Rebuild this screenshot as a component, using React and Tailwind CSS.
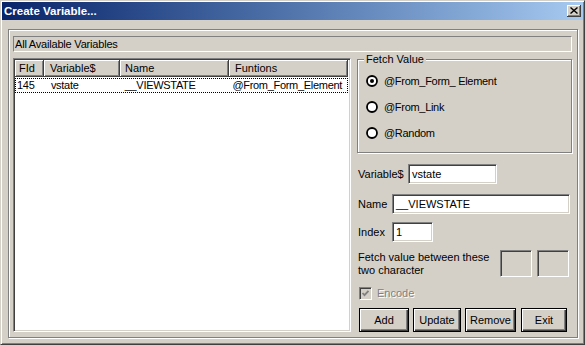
import React from "react";

const sunken =
  "border border-t-[#808080] border-l-[#808080] border-b-white border-r-white shadow-[inset_1px_1px_0_#404040,inset_-1px_-1px_0_#d4d0c8]";
const etched =
  "border border-[#808080] shadow-[inset_1px_1px_0_#fff,1px_1px_0_#fff]";
const raisedBtn =
  "border border-black bg-[#d4d0c8] shadow-[inset_1px_1px_0_#fff,inset_-1px_-1px_0_#404040,inset_-2px_-2px_0_#808080]";
const headCell =
  "h-full flex items-center border-r border-b border-[#404040] shadow-[inset_1px_1px_0_#fff,inset_-1px_-1px_0_#808080] bg-[#d4d0c8]";

const Radio = ({ checked }) => (
  <svg width="12" height="12" viewBox="0 0 12 12">
    <circle cx="6" cy="6" r="5" fill="#fff" stroke="#000" strokeWidth="1.8" />
    {checked && <circle cx="6" cy="6" r="2" fill="#000" />}
  </svg>
);

const Button = ({ label, className }) => (
  <div className={`${raisedBtn} h-[24px] flex items-center justify-center ${className}`}>
    {label}
  </div>
);

const columns = [
  { name: "FId", w: "w-[29px]", hp: "pl-[4px]", rp: "pl-[1px]", val: "145" },
  { name: "Variable$", w: "w-[76px]", hp: "pl-[6px]", rp: "pl-[7px]", val: "vstate" },
  { name: "Name", w: "w-[109px]", hp: "pl-[5px]", rp: "pl-[5px]", val: "__VIEWSTATE" },
  { name: "Funtions", w: "w-[119px]", hp: "pl-[6px]", rp: "pl-[4px]", val: "@From_Form_Element" },
];

export default function App() {
  return (
    <div className="w-[585px] h-[345px] bg-[#d4d0c8] border border-t-[#d4d0c8] border-l-[#d4d0c8] border-r-[#404040] border-b-[#404040] shadow-[inset_1px_1px_0_#fff,inset_-1px_-1px_0_#808080] flex flex-col overflow-hidden font-['Liberation_Sans',Arial,sans-serif] text-[11px] leading-[13px] text-black">
      {/* title bar */}
      <div className="mx-[1px] mt-[1px] h-[18px] flex items-center justify-between pl-[2px] pr-[2px] bg-linear-to-r from-[#0a246a] to-[#a6caf0]">
        <span className="text-white font-bold text-[11.5px]">Create Variable...</span>
        <div className="w-[14px] h-[12px] bg-[#d4d0c8] border-r border-b border-[#404040] shadow-[inset_1px_1px_0_#fff,inset_-1px_-1px_0_#808080] flex items-center justify-center">
          <svg width="8" height="7" viewBox="0 0 8 7">
            <path d="M0.5 0.5 L7.5 6.5 M7.5 0.5 L0.5 6.5" stroke="#000" strokeWidth="1.4" />
          </svg>
        </div>
      </div>

      {/* main group */}
      <div className={`${etched} ml-[7px] mt-[9px] w-[570px] h-[309px] pl-[4px] pr-[5px] pt-[6px] flex flex-col`}>
        <div className="h-[16px] border border-t-[#808080] border-l-[#808080] border-b-white border-r-white pl-[1px] flex items-center tracking-[-0.2px]">
          All Available Variables
        </div>

        <div className="mt-[6px] flex">
          {/* list view */}
          <div className={`${sunken} bg-white w-[338px] h-[274px] p-[1px] flex flex-col`}>
            <div className="flex h-[17px]">
              {columns.map((c) => (
                <div key={c.name} className={`${headCell} ${c.w} ${c.hp}`}>
                  {c.name}
                </div>
              ))}
            </div>
            <div className="mt-[1px] flex h-[15px] w-[333px] border border-dotted border-black items-center tracking-[-0.3px]">
              {columns.map((c, i) => (
                <div key={c.name} className={`${i === 0 ? "w-[28px]" : c.w} ${c.rp} whitespace-nowrap overflow-hidden`}>
                  {c.val}
                </div>
              ))}
            </div>
          </div>

          {/* right panel */}
          <div className="ml-[6px] w-[215px] flex flex-col">
            <div className={`${etched} relative mt-[1px] h-[94px] pt-[14px] pl-[8px] flex flex-col gap-[12px]`}>
              <span className="absolute left-[6px] -top-[7px] px-[2px] bg-[#d4d0c8]">Fetch Value</span>
              {["@From_Form_ Element", "@From_Link", "@Random"].map((t, i) => (
                <div key={t} className="h-[14px] flex items-center gap-[6px]">
                  <Radio checked={i === 0} />
                  <span className="tracking-[-0.3px]">{t}</span>
                </div>
              ))}
            </div>

            <div className="mt-[11px] h-[20px] flex items-center">
              <span className="w-[51px] pl-[1px]">Variable$</span>
              <div className={`${sunken} bg-white w-[89px] h-[20px] pl-[3px] flex items-center`}>vstate</div>
            </div>
            <div className="mt-[10px] h-[20px] flex items-center">
              <span className="w-[35px] pl-[1px]">Name</span>
              <div className={`${sunken} bg-white w-[178px] h-[20px] pl-[3px] flex items-center`}>__VIEWSTATE</div>
            </div>
            <div className="mt-[8px] h-[20px] flex items-center">
              <span className="w-[35px] pl-[1px]">Index</span>
              <div className={`${sunken} bg-white w-[41px] h-[20px] pl-[3px] flex items-center`}>1</div>
            </div>

            <div className="mt-[8px] flex">
              <div className="w-[143px] pl-[1px] pt-[1px]">
                Fetch value between these
                <br />
                two character
              </div>
              <div className={`${sunken} w-[32px] h-[27px]`} />
              <div className={`${sunken} ml-[5px] w-[32px] h-[27px]`} />
            </div>

            <div className="mt-[10px] h-[13px] flex items-center">
              <div className={`${sunken} ml-[2px] w-[13px] h-[13px] flex items-center justify-center`}>
                <svg width="9" height="9" viewBox="0 0 9 9">
                  <path d="M1.5 4 L3.5 6.2 L7.5 1.8" fill="none" stroke="#808080" strokeWidth="1.8" />
                </svg>
              </div>
              <span className="ml-[5px] text-[#808080] [text-shadow:1px_1px_0_#fff]">Encode</span>
            </div>

            <div className="mt-[8px] flex">
              <Button label="Add" className="ml-[2px] w-[50px]" />
              <Button label="Update" className="ml-[4px] w-[48px]" />
              <Button label="Remove" className="ml-[4px] w-[51px]" />
              <Button label="Exit" className="ml-[5px] w-[46px]" />
            </div>
          </div>
        </div>
      </div>
    </div>
  );
}
